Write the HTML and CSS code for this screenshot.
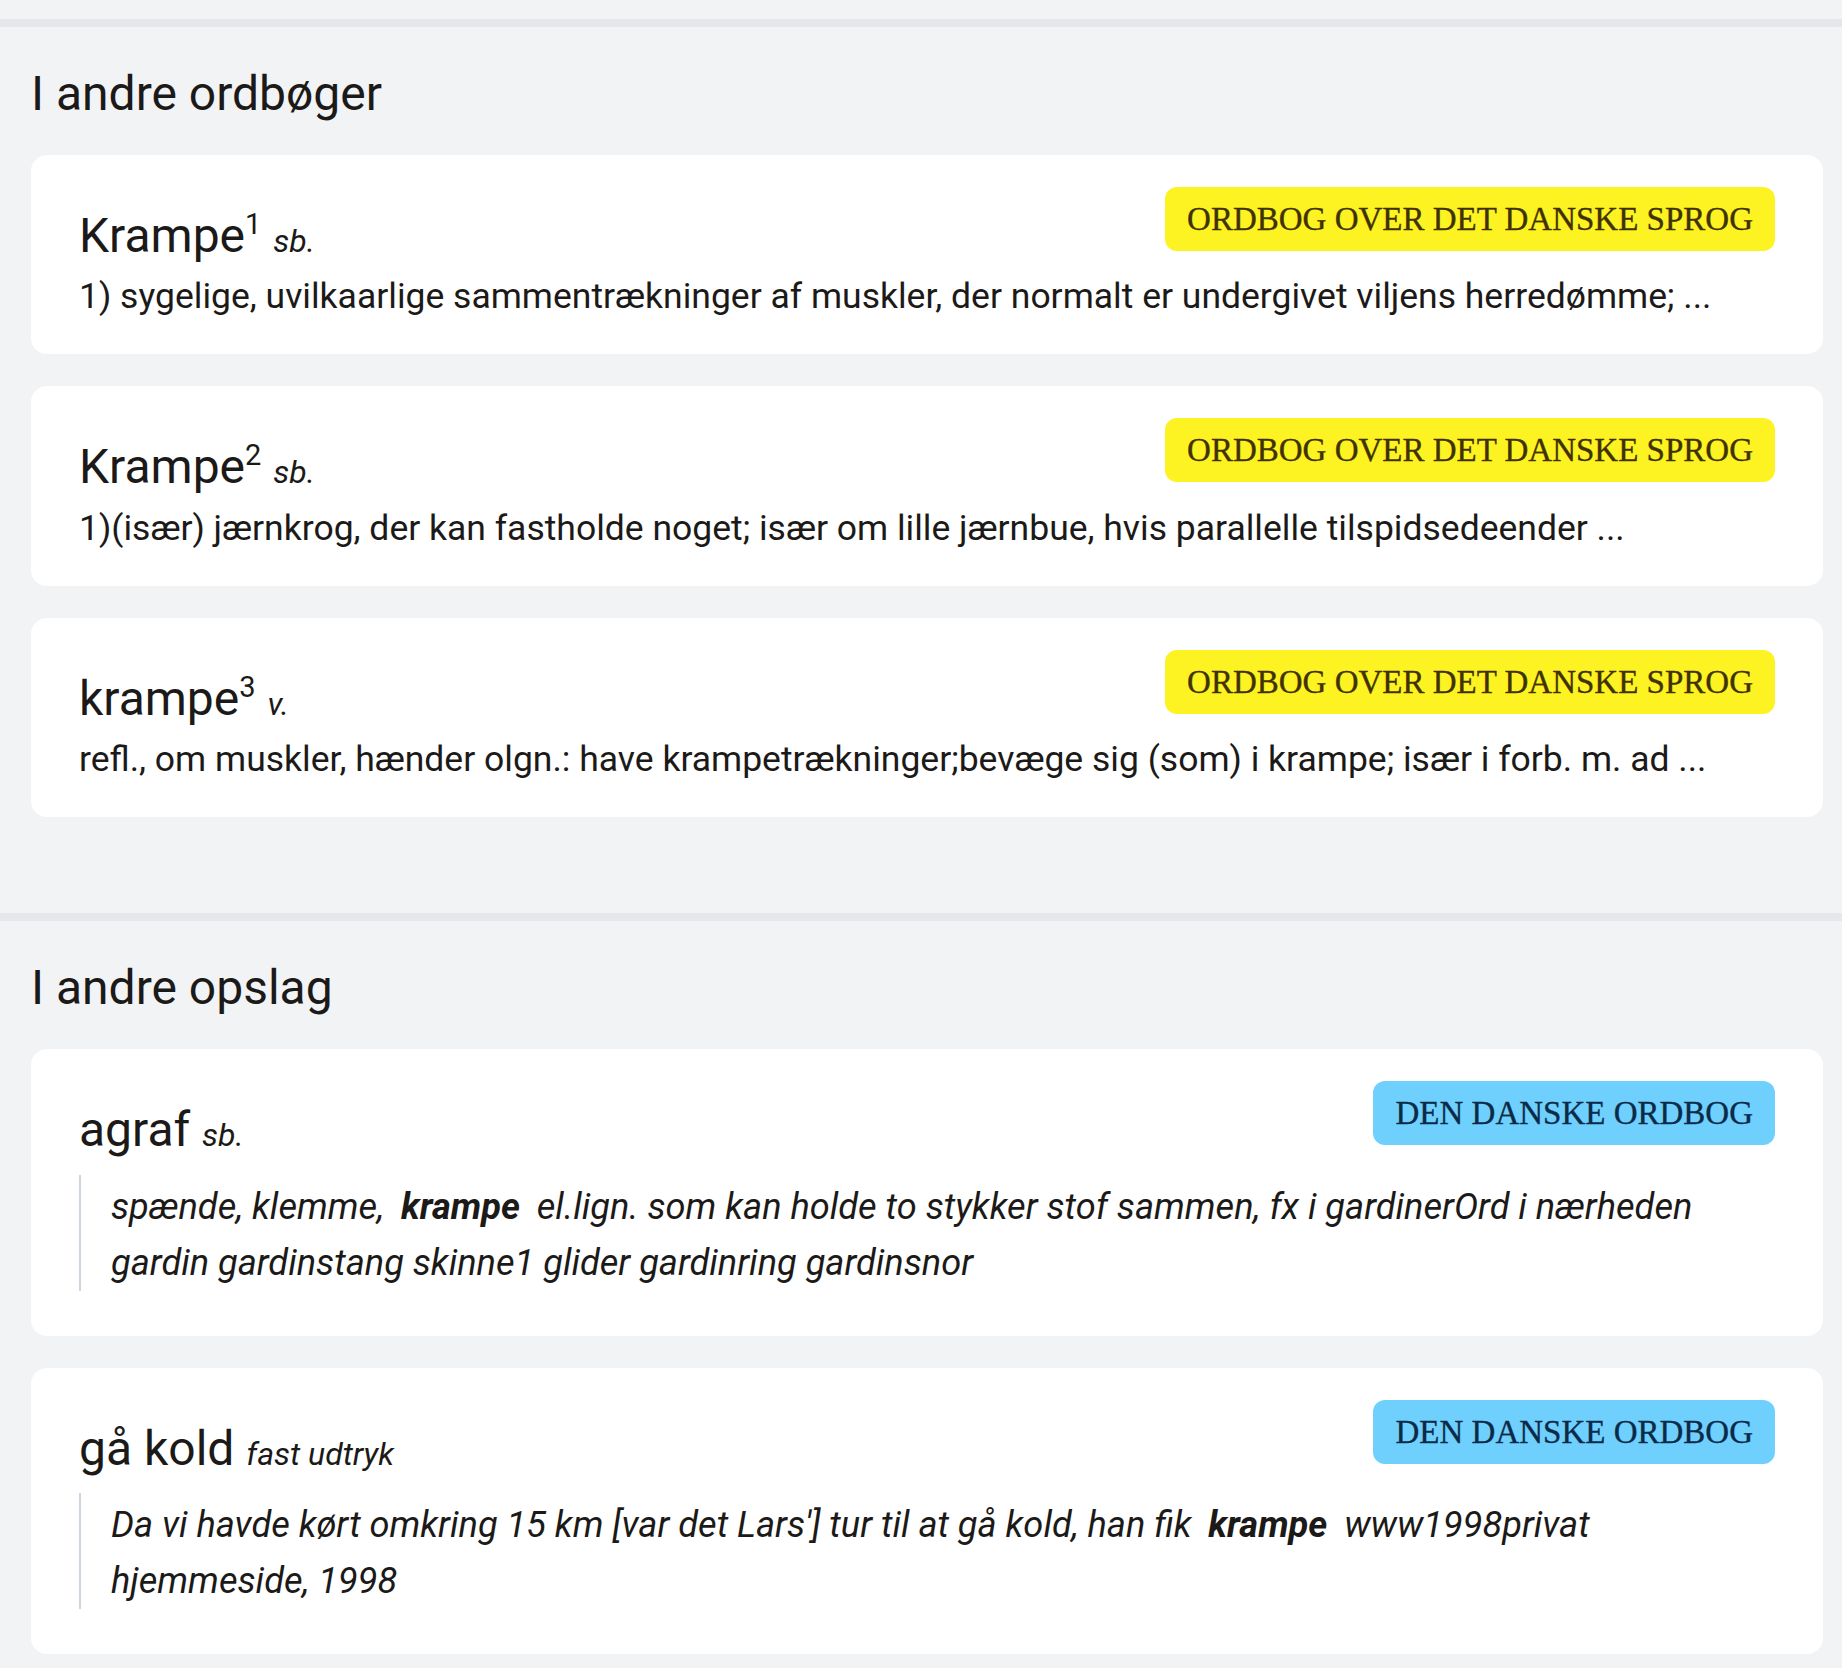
FILE: index.html
```html
<!DOCTYPE html>
<html lang="da">
<head>
<meta charset="utf-8">
<title>Krampe – andre ordbøger</title>
<link rel="stylesheet" href="styles.css">
</head>
<body>
<div class="top-strip"></div>

<section class="group">
  <h2 class="group-title">I andre ordbøger</h2>
  <div class="cards">
    <article class="card">
      <div class="card-head">
        <h3 class="headword">Krampe<sup>1</sup> <span class="pos">sb.</span></h3>
        <span class="badge badge-ods">ORDBOG OVER DET DANSKE SPROG</span>
      </div>
      <p class="def">1) sygelige, uvilkaarlige sammentrækninger af muskler, der normalt er undergivet viljens herredømme; ...</p>
    </article>
    <article class="card">
      <div class="card-head">
        <h3 class="headword">Krampe<sup>2</sup> <span class="pos">sb.</span></h3>
        <span class="badge badge-ods">ORDBOG OVER DET DANSKE SPROG</span>
      </div>
      <p class="def">1)(især) jærnkrog, der kan fastholde noget; især om lille jærnbue, hvis parallelle tilspidsedeender ...</p>
    </article>
    <article class="card">
      <div class="card-head">
        <h3 class="headword">krampe<sup>3</sup> <span class="pos">v.</span></h3>
        <span class="badge badge-ods">ORDBOG OVER DET DANSKE SPROG</span>
      </div>
      <p class="def">refl., om muskler, hænder olgn.: have krampetrækninger;bevæge sig (som) i krampe; især i forb. m. ad ...</p>
    </article>
  </div>
</section>

<section class="group">
  <h2 class="group-title">I andre opslag</h2>
  <div class="cards">
    <article class="card">
      <div class="card-head">
        <h3 class="headword">agraf <span class="pos">sb.</span></h3>
        <span class="badge badge-ddo">DEN DANSKE ORDBOG</span>
      </div>
      <blockquote class="quote">spænde, klemme, <strong class="hit">krampe</strong> el.lign. som kan holde to stykker stof sammen, fx i gardinerOrd i nærheden gardin gardinstang skinne1 glider gardinring gardinsnor</blockquote>
    </article>
    <article class="card">
      <div class="card-head">
        <h3 class="headword">gå kold <span class="pos">fast udtryk</span></h3>
        <span class="badge badge-ddo">DEN DANSKE ORDBOG</span>
      </div>
      <blockquote class="quote">Da vi havde kørt omkring 15 km [var det Lars'] tur til at gå kold, han fik <strong class="hit">krampe</strong> www1998privat hjemmeside, 1998</blockquote>
    </article>
  </div>
</section>
</body>
</html>
```
FILE: styles.css
```css
html, body {
  margin: 0;
  padding: 0;
}

body {
  background: #f2f3f5;
  color: #1c1a18;
  font-family: Roboto, "Noto Sans", "Liberation Sans", sans-serif;
}

.top-strip {
  height: 19px;
}

.group {
  border-top: 8px solid #e5e7ea;
  padding: 38px 19px 96px 31px;
}

.group-title {
  margin: 0 0 32px;
  font-size: 48px;
  font-weight: 400;
  line-height: 57.6px;
}

.cards {
  display: flex;
  flex-direction: column;
  gap: 32px;
}

.card {
  background: #ffffff;
  border-radius: 16px;
  padding: 32px 48px 30px;
}

.card-head {
  display: flex;
  justify-content: space-between;
  align-items: flex-start;
}

.headword {
  margin: 20px 0 0;
  font-size: 48px;
  font-weight: 400;
  line-height: 57.6px;
}

.headword sup {
  font-size: 29px;
  line-height: 0;
  vertical-align: 18px;
}

.pos {
  font-size: 32px;
  font-style: italic;
  line-height: 1;
}

.badge {
  flex: none;
  font-family: "Liberation Serif", "Times New Roman", serif;
  font-size: 33px;
  line-height: 40px;
  padding: 12px 22px;
  border-radius: 12px;
  white-space: nowrap;
  -webkit-text-stroke: 0.35px currentColor;
}

.badge-ods {
  background: #fef322;
  color: #3f3200;
}

.badge-ddo {
  background: #6fd0fe;
  color: #0a2a48;
}

.def {
  margin: 4px 0 0;
  font-size: 35.5px;
  line-height: 56px;
}

.quote {
  margin: 16px 0 15px;
  border-left: 2px solid #ccd7e2;
  padding: 4px 0 0 30px;
  font-size: 36.2px;
  font-style: italic;
  line-height: 56px;
}

.hit {
  font-weight: 700;
  margin: 0 8px;
}
```
